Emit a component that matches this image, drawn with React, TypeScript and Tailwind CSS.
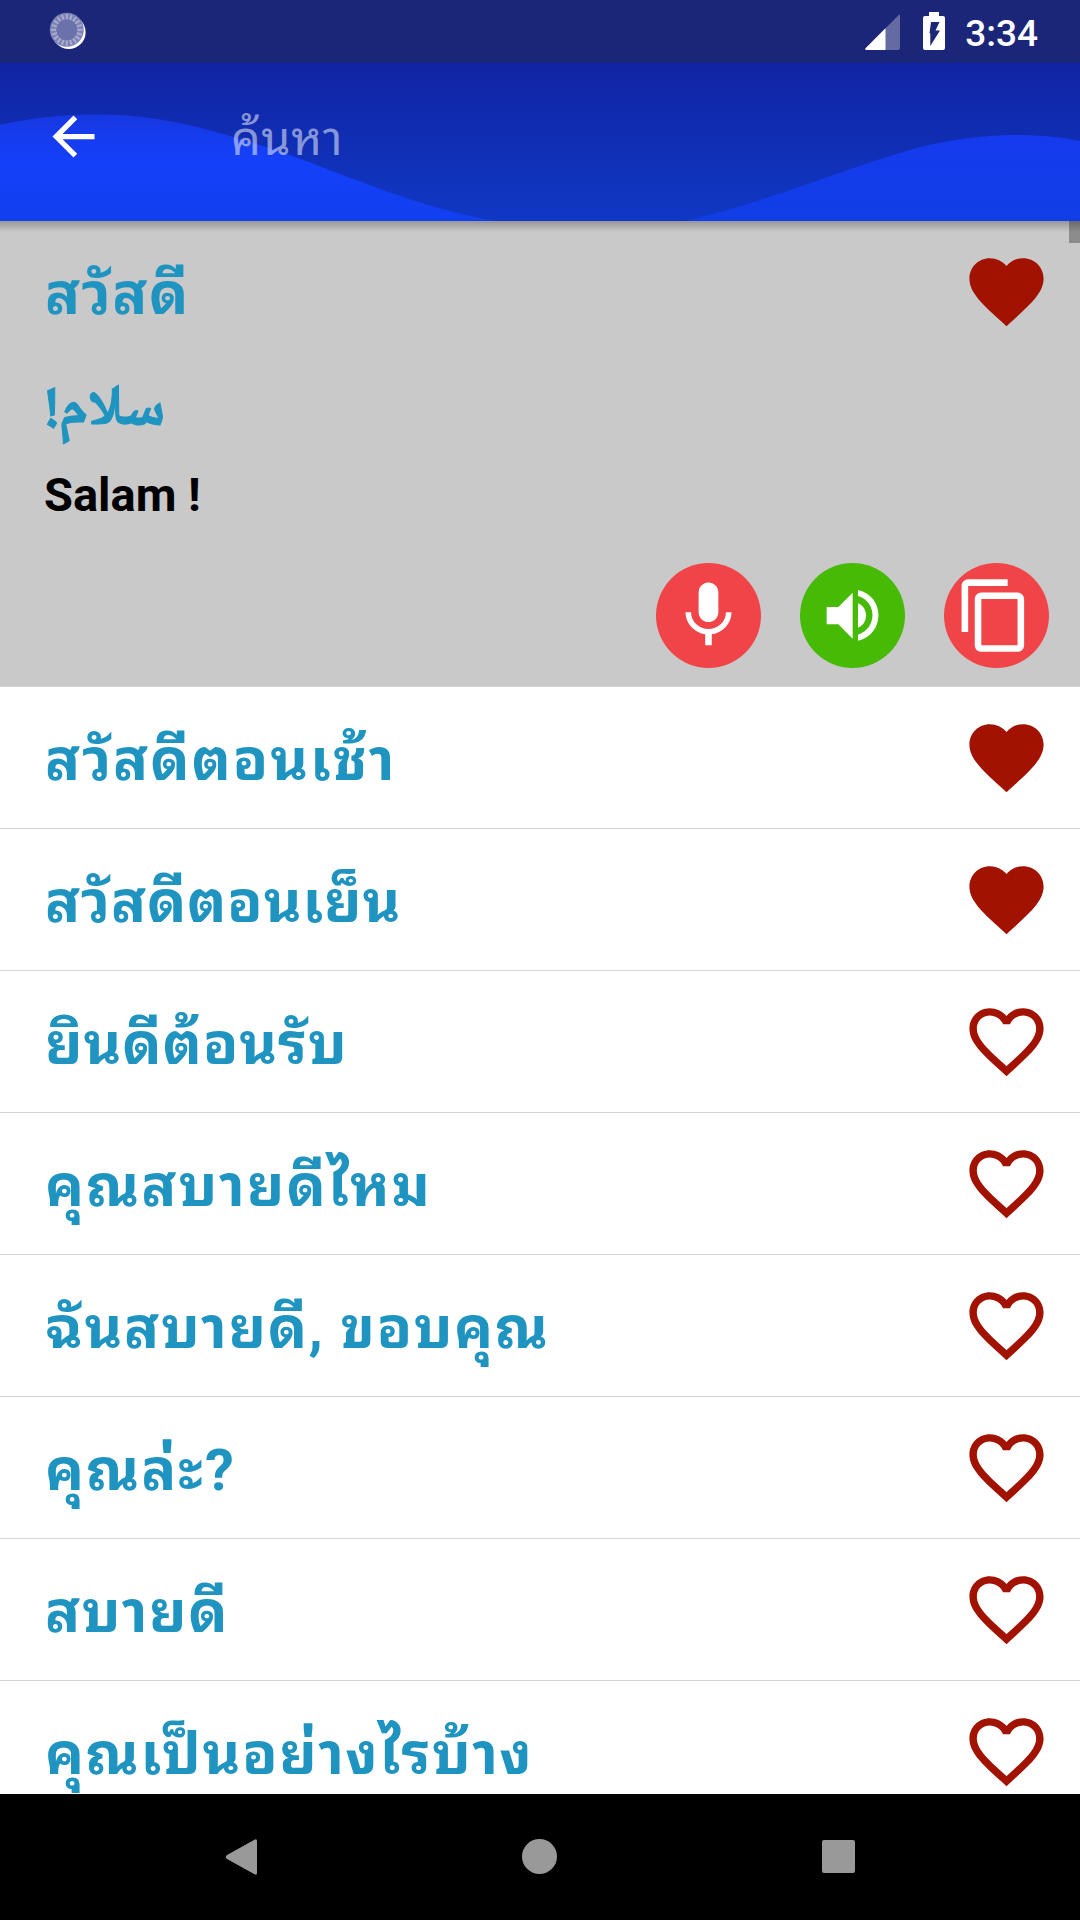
import type { ReactNode } from "react";

const PHRASES = [
  { text: "สวัสดีตอนเช้า", liked: true, tracking: "tracking-[1.9px]" },
  { text: "สวัสดีตอนเย็น", liked: true, tracking: "tracking-[0.8px]" },
  { text: "ยินดีต้อนรับ", liked: false, tracking: "tracking-[0.9px]" },
  { text: "คุณสบายดีไหม", liked: false, tracking: "tracking-[2px]" },
  { text: "ฉันสบายดี, ขอบคุณ", liked: false, tracking: "tracking-[1.6px]" },
  { text: "คุณล่ะ?", liked: false, tracking: "tracking-[2px]" },
  { text: "สบายดี", liked: false, tracking: "tracking-[1.5px]" },
  { text: "คุณเป็นอย่างไรบ้าง", liked: false, tracking: "tracking-[1.6px]" },
];

const TICKS = Array.from({ length: 20 }, (_, i) => i * 18);

function Heart({ filled }: { filled: boolean }) {
  return (
    <svg viewBox="0 0 24 24" className="size-[89px] shrink-0 fill-[#a11200]">
      {filled ? (
        <path d="M12 21.35l-1.45-1.32C5.4 15.36 2 12.28 2 8.5 2 5.42 4.42 3 7.5 3c1.74 0 3.41.81 4.5 2.09C13.09 3.81 14.76 3 16.5 3 19.58 3 22 5.42 22 8.5c0 3.78-3.4 6.86-8.55 11.54L12 21.35z" />
      ) : (
        <path d="M16.5 3c-1.74 0-3.41.81-4.5 2.09C10.91 3.81 9.24 3 7.5 3 4.42 3 2 5.42 2 8.5c0 3.78 3.4 6.86 8.55 11.54L12 21.35l1.45-1.32C18.6 15.36 22 12.28 22 8.5 22 5.42 19.58 3 16.5 3zm-4.4 15.55l-.1.1-.1-.1C7.14 14.24 4 11.39 4 8.5 4 6.5 5.5 5 7.5 5c1.54 0 3.04.99 3.57 2.36h1.87C13.46 5.99 14.96 5 16.5 5c2 0 3.5 1.5 3.5 3.5 0 2.89-3.14 5.74-7.9 10.05z" />
      )}
    </svg>
  );
}

function RoundButton({ color, label, children }: { color: string; label: string; children: ReactNode }) {
  return (
    <button aria-label={label} className={`flex size-[105px] items-center justify-center rounded-full ${color}`}>
      {children}
    </button>
  );
}

function StatusBar() {
  return (
    <div className="flex h-[63px] shrink-0 items-start justify-between bg-[#1b2678] pl-[49px] pr-[42px]">
      <svg viewBox="0 0 40 40" className="mt-3 size-10">
        <circle cx="19.8" cy="20.2" r="16.800" fill="#fff" />
        <circle cx="17.8" cy="17.8" r="17" fill="#7d82b4" />
        {TICKS.map((deg) => (
          <path key={deg} d="M17.8 2v5.500" stroke="#a9acce" strokeWidth="2" transform={`rotate(${deg} 17.8 17.8)`} />
        ))}
        <circle cx="17.8" cy="17.8" r="10.5" fill="#6b71aa" />
      </svg>
      <div className="flex items-start">
        <svg viewBox="0 0 36 36" className="mr-[22px] mt-[14px] size-9">
          <path d="M33.500 1.300q1.500-1.500 1.500.5V34q0 2-2 2H2Q-1 36 .8 34z" fill="#fff" fillOpacity=".32" />
          <path d="M20.500 14.300V36H2Q-1 36 .8 34z" fill="#fff" />
        </svg>
        <svg viewBox="0 0 22 38" className="mr-[20px] mt-3 h-[38px] w-[22px]">
          <path d="M6 0h10v4h4q2 0 2 2v30q0 2-2 2H2q-2 0-2-2V6q0-2 2-2h4z" fill="#fff" />
          <path d="M8 10h8.500l-4 8.500H17L7.300 34V21.500H6.500z" fill="#1b2678" />
        </svg>
        <span className="mt-3 text-[37px] font-medium leading-[44px] text-white">3:34</span>
      </div>
    </div>
  );
}

function SearchBar() {
  return (
    <header className="relative h-[158px] shrink-0 bg-linear-to-b from-[#1024a4] to-[#1038c4]">
      <svg viewBox="0 63 1080 158" preserveAspectRatio="none" className="absolute inset-0 h-full w-full">
        <defs>
          <linearGradient id="wave" x1="0" y1="0" x2="0" y2="1">
            <stop offset="0" stopColor="#1638e2" />
            <stop offset=".45" stopColor="#1540fa" />
            <stop offset="1" stopColor="#123fee" />
          </linearGradient>
          <linearGradient id="waveRight" x1="0" y1="0" x2="0" y2="1">
            <stop offset="0" stopColor="#163aee" />
            <stop offset="1" stopColor="#103ee6" />
          </linearGradient>
        </defs>
        <path d="M0 125C30 118 60 114.500 95 114.500C170 114.500 225 134 290 155C350 177 420 208 495 221H0z" fill="url(#wave)" />
        <path d="M686 221C760 204 830 174 900 153C975 130 1040 133 1080 141V221z" fill="url(#waveRight)" />
      </svg>
      <div className="relative flex h-full items-center pl-[42px]">
        <svg viewBox="0 0 24 24" className="mb-[11px] size-[63px] fill-white">
          <path d="M20 11H7.830l5.590-5.590L12 4l-8 8 8 8 1.410-1.410L7.830 13H20v-2z" />
        </svg>
        <span className="mb-[8px] ml-[126px] text-[47px] leading-[63px] tracking-[0.5px] text-white/50">ค้นหา</span>
      </div>
    </header>
  );
}

function OpenPhrase() {
  return (
    <section className="relative h-[466px] shrink-0 border-b border-[#d2d2d2] bg-[#c9c9c9] text-[#2094c0]">
      <div className="absolute inset-x-0 top-0 h-[11px] bg-linear-to-b from-black/25 to-transparent" />
      <div className="absolute right-0 top-0 h-[22px] w-[11px] bg-black/30" />
      <div className="flex h-[141px] items-center justify-between pl-[45px] pr-[29px]">
        <span className="pt-1.5 text-[58px] font-bold tracking-[1.5px]">สวัสดี</span>
        <Heart filled />
      </div>
      <div className="flex flex-col items-start pl-[44px]">
        <span className="mt-[17px] font-['Noto_Naskh_Arabic','Noto_Sans_Arabic','DejaVu_Sans',sans-serif] text-[58px] font-bold leading-[68px] [-webkit-text-stroke:1px_#2094c0]">
          !سلام
        </span>
        <span className="mt-[18px] text-[47px] font-bold leading-[60px] text-black">Salam !</span>
      </div>
      <div className="mt-[38px] flex justify-end gap-[39px] pr-[31px]">
        <RoundButton color="bg-[#f04448]" label="บันทึกเสียง">
          <svg viewBox="0 0 24 24" className="size-[79px] fill-white">
            <path d="M12 14c1.660 0 2.990-1.340 2.990-3L15 5c0-1.660-1.340-3-3-3S9 3.340 9 5v6c0 1.660 1.340 3 3 3zm5.300-3c0 3-2.540 5.100-5.300 5.100S6.700 14 6.700 11H5c0 3.410 2.720 6.230 6 6.720V21h2v-3.280c3.280-.48 6-3.300 6-6.720h-1.700z" />
          </svg>
        </RoundButton>
        <RoundButton color="bg-[#46ba04]" label="ฟัง">
          <svg viewBox="0 0 315 315" className="size-[105px] fill-white">
            <path d="M80 132h35l43-43v138l-43-43H80z" />
            <path d="M174 121c32 12 32 61 0 73z" />
            <path d="M174 81c82 18 82 134 0 152v-18c58-18 58-99 0-116z" />
          </svg>
        </RoundButton>
        <RoundButton color="bg-[#f04448]" label="คัดลอก">
          <svg viewBox="0 0 24 24" className="mr-[5px] size-[79px] fill-white">
            <path d="M16 1H4c-1.100 0-2 .9-2 2v14h2V3h12V1zm3 4H8c-1.100 0-2 .9-2 2v14c0 1.100.9 2 2 2h11c1.100 0 2-.9 2-2V7c0-1.100-.9-2-2-2zm0 16H8V7h11v14z" />
          </svg>
        </RoundButton>
      </div>
    </section>
  );
}

function NavigationBar() {
  return (
    <nav className="flex h-[126px] shrink-0 items-center justify-between bg-black px-[225px] pb-px">
      <svg viewBox="0 0 32 36" className="h-9 w-8 fill-[#999]">
        <path d="M29.500.7Q32-.6 32 2v32q0 2.600-2.500 1.300L2 20Q-.5 18 2 16z" />
      </svg>
      <div className="size-[35px] rounded-full bg-[#999]" />
      <div className="size-[33px] rounded-[2px] bg-[#999]" />
    </nav>
  );
}

export default function App() {
  return (
    <div className="flex h-[1920px] w-[1080px] flex-col overflow-hidden bg-white font-[Roboto,'Noto_Sans_Thai_Looped','Noto_Sans_Thai',sans-serif]">
      <StatusBar />
      <SearchBar />
      <main className="flex min-h-0 flex-1 flex-col overflow-hidden">
        <OpenPhrase />
        <ul>
          {PHRASES.map((phrase) => (
            <li
              key={phrase.text}
              className="flex h-[142px] items-center justify-between border-b border-[#d5d5d5] pl-[45px] pr-[29px]"
            >
              <span className={`pt-1.5 text-[58px] font-bold text-[#2094c0] ${phrase.tracking}`}>{phrase.text}</span>
              <Heart filled={phrase.liked} />
            </li>
          ))}
        </ul>
      </main>
      <NavigationBar />
    </div>
  );
}
